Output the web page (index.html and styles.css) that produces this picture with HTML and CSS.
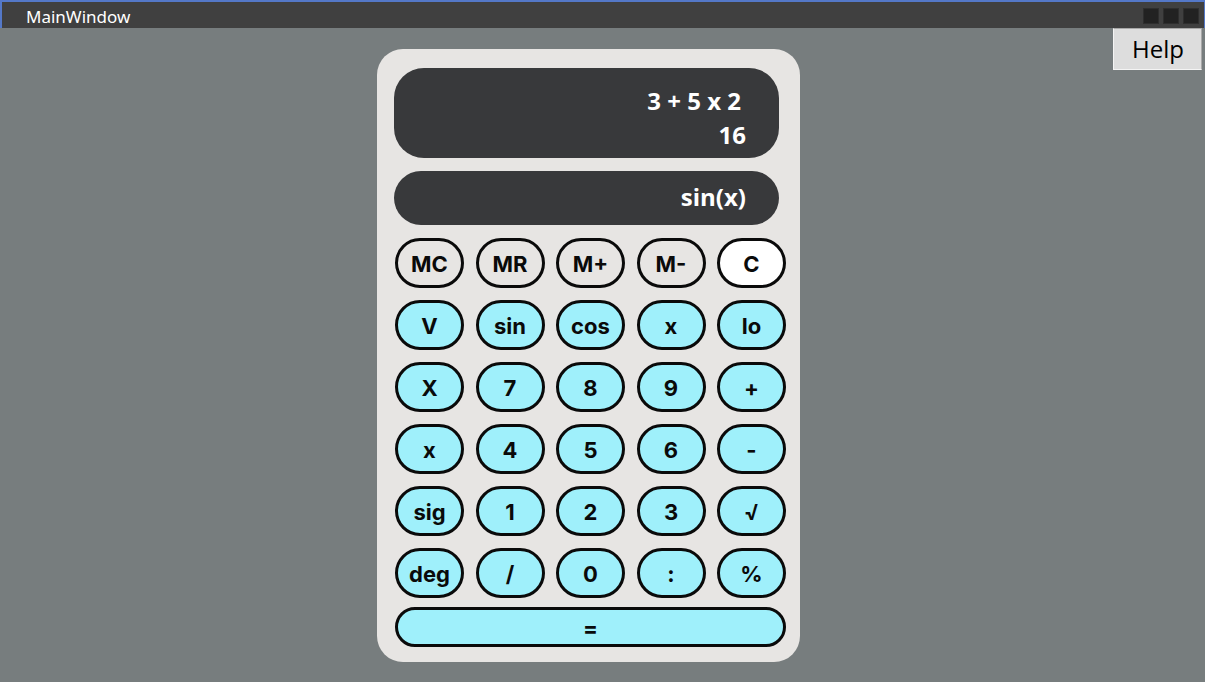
FILE: index.html
```html
<!DOCTYPE html>
<html>
<head>
<meta charset="utf-8">
<title>MainWindow</title>
<link rel="stylesheet" href="styles.css">
</head>
<body>
<div class="window">
  <div class="titlebar">
    <span class="title">MainWindow</span>
    <div class="controls">
      <span class="ctl"></span><span class="ctl"></span><span class="ctl"></span>
    </div>
  </div>
  <div class="client">
    <button class="help">Help</button>
    <div class="calc">
      <div class="display main">
        <div class="expr">3 + 5 x 2</div>
        <div class="result">16</div>
      </div>
      <div class="display func">sin(x)</div>
      <div class="keys">
        <button class="key mem">MC</button>
        <button class="key mem">MR</button>
        <button class="key mem">M+</button>
        <button class="key mem">M-</button>
        <button class="key clear">C</button>

        <button class="key">V</button>
        <button class="key">sin</button>
        <button class="key">cos</button>
        <button class="key">x</button>
        <button class="key">lo</button>

        <button class="key">X</button>
        <button class="key">7</button>
        <button class="key">8</button>
        <button class="key">9</button>
        <button class="key">+</button>

        <button class="key">x</button>
        <button class="key">4</button>
        <button class="key">5</button>
        <button class="key">6</button>
        <button class="key">-</button>

        <button class="key">sig</button>
        <button class="key">1</button>
        <button class="key">2</button>
        <button class="key">3</button>
        <button class="key">√</button>

        <button class="key">deg</button>
        <button class="key">/</button>
        <button class="key">0</button>
        <button class="key">:</button>
        <button class="key">%</button>

        <button class="key equals">=</button>
      </div>
    </div>
  </div>
</div>
</body>
</html>
```
FILE: styles.css
```css
* { box-sizing: border-box; }
html, body {
  margin: 0;
  padding: 0;
  width: 1205px;
  height: 682px;
  overflow: hidden;
  background: #777d7e;
}
.window {
  display: flex;
  flex-direction: column;
  height: 682px;
}
.titlebar {
  height: 28px;
  flex-shrink: 0;
  background: #404040;
  border-top: 2px solid #5478c8;
  border-left: 2px solid #5478c8;
  border-right: 1px solid #5478c8;
  display: flex;
  align-items: center;
  justify-content: space-between;
  padding-left: 24px;
  padding-right: 5px;
}
.title {
  font-family: "Noto Sans", "Open Sans", sans-serif;
  font-size: 17px;
  color: #ffffff;
  line-height: 1;
  margin-top: 2px;
}
.controls {
  display: flex;
  gap: 4px;
  margin-top: 2px;
}
.ctl {
  width: 16px;
  height: 16px;
  background: #222222;
  border: 1px solid #2e2e2e;
}
.client {
  position: relative;
  flex: 1;
  padding-top: 21px;
  padding-left: 377px;
}
.help {
  position: absolute;
  top: 0;
  right: 3px;
  width: 89px;
  height: 42px;
  background: #dddddd;
  border: 1px solid #a8a8a8;
  border-left-color: #f4f4f4;
  border-bottom-color: #f4f4f4;
  font-family: "Open Sans", "Noto Sans", sans-serif;
  font-size: 24px;
  color: #000;
  padding: 0 0 0 1px;
  line-height: 1;
}
.calc {
  width: 423px;
  height: 613px;
  background: #e7e5e3;
  border-radius: 26px;
  padding: 19px 14px 15px 17px;
  display: flex;
  flex-direction: column;
}
.display {
  flex-shrink: 0;
  width: 385px;
  background: #38393b;
  color: #ffffff;
  font-family: "Open Sans", "Noto Sans", sans-serif;
  font-weight: 700;
  font-size: 24px;
  text-align: right;
  line-height: 1;
}
.main {
  height: 90px;
  border-radius: 30px;
  padding: 21px 33px 0 0;
  display: flex;
  flex-direction: column;
  align-items: flex-end;
  gap: 10px;
}
.expr { padding-right: 5px; }
.func {
  margin-top: 13px;
  height: 54px;
  border-radius: 27px;
  padding: 14px 33px 0 0;
}
.keys {
  flex-shrink: 0;
  margin-top: 13px;
  margin-left: 1px;
  display: grid;
  grid-template-columns: repeat(5, 69px);
  grid-template-rows: repeat(6, 50px) 37px;
  column-gap: 11.5px;
  row-gap: 12px;
}
.key {
  background: #9ff0fb;
  border: 3px solid #0a0a0a;
  border-radius: 25px;
  font-family: "Inter", "Open Sans", sans-serif;
  font-weight: 700;
  font-size: 22px;
  color: #0a0a0a;
  padding: 1px 0 0 0;
  line-height: 1;
}
.key.mem { background: #e7e5e3; }
.key.clear { background: #ffffff; }
.key.equals {
  grid-column: 1 / 6;
  height: 40px;
  margin-top: -3px;
  border-radius: 20px;
}
```
